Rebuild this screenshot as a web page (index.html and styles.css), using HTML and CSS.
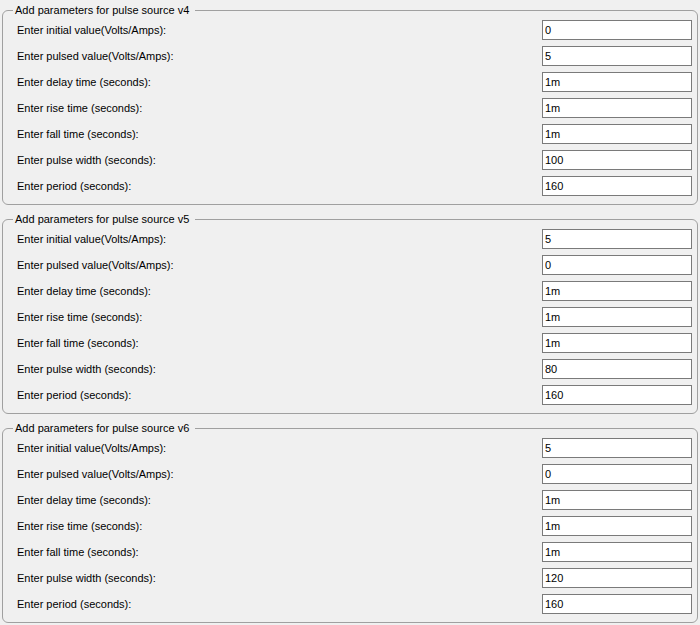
FILE: index.html
```html
<!DOCTYPE html>
<html>
<head>
<meta charset="utf-8">
<link rel="stylesheet" href="styles.css">
</head>
<body>
<div class="page">
  <fieldset class="group">
    <legend class="group-title">Add parameters for pulse source v4</legend>
    <div class="row"><span class="label">Enter initial value(Volts/Amps):</span><input class="field" value="0"></div>
    <div class="row"><span class="label">Enter pulsed value(Volts/Amps):</span><input class="field" value="5"></div>
    <div class="row"><span class="label">Enter delay time (seconds):</span><input class="field" value="1m"></div>
    <div class="row"><span class="label">Enter rise time (seconds):</span><input class="field" value="1m"></div>
    <div class="row"><span class="label">Enter fall time (seconds):</span><input class="field" value="1m"></div>
    <div class="row"><span class="label">Enter pulse width (seconds):</span><input class="field" value="100"></div>
    <div class="row"><span class="label">Enter period (seconds):</span><input class="field" value="160"></div>
  </fieldset>
  <fieldset class="group">
    <legend class="group-title">Add parameters for pulse source v5</legend>
    <div class="row"><span class="label">Enter initial value(Volts/Amps):</span><input class="field" value="5"></div>
    <div class="row"><span class="label">Enter pulsed value(Volts/Amps):</span><input class="field" value="0"></div>
    <div class="row"><span class="label">Enter delay time (seconds):</span><input class="field" value="1m"></div>
    <div class="row"><span class="label">Enter rise time (seconds):</span><input class="field" value="1m"></div>
    <div class="row"><span class="label">Enter fall time (seconds):</span><input class="field" value="1m"></div>
    <div class="row"><span class="label">Enter pulse width (seconds):</span><input class="field" value="80"></div>
    <div class="row"><span class="label">Enter period (seconds):</span><input class="field" value="160"></div>
  </fieldset>
  <fieldset class="group">
    <legend class="group-title">Add parameters for pulse source v6</legend>
    <div class="row"><span class="label">Enter initial value(Volts/Amps):</span><input class="field" value="5"></div>
    <div class="row"><span class="label">Enter pulsed value(Volts/Amps):</span><input class="field" value="0"></div>
    <div class="row"><span class="label">Enter delay time (seconds):</span><input class="field" value="1m"></div>
    <div class="row"><span class="label">Enter rise time (seconds):</span><input class="field" value="1m"></div>
    <div class="row"><span class="label">Enter fall time (seconds):</span><input class="field" value="1m"></div>
    <div class="row"><span class="label">Enter pulse width (seconds):</span><input class="field" value="120"></div>
    <div class="row"><span class="label">Enter period (seconds):</span><input class="field" value="160"></div>
  </fieldset>
</div>
</body>
</html>
```
FILE: styles.css
```css
html, body {
  margin: 0;
  padding: 0;
  background: #f0f0f0;
}
body {
  font-family: "Liberation Sans", Arial, sans-serif;
  font-size: 11px;
  color: #000;
}
.page {
  width: 700px;
  box-sizing: border-box;
  padding: 3px 2px 0 2px;
  display: flex;
  flex-direction: column;
  gap: 7px;
}
.group {
  margin: 0;
  padding: 3px 5px 8px 14px;
  border: 1px solid #a0a0a0;
  border-radius: 6px;
  display: flex;
  flex-direction: column;
  gap: 6px;
  min-width: 0;
}
.group-title {
  font-size: 11px;
  line-height: 14px;
  padding: 0 6px 0 2px;
  margin-left: -4px;
  color: #000;
}
.row {
  display: flex;
  align-items: center;
  justify-content: space-between;
  height: 20px;
}
.label {
  line-height: 14px;
}
.field {
  box-sizing: border-box;
  width: 150px;
  height: 20px;
  margin: 0;
  padding: 0 2px;
  border: 1px solid #7a7a7a;
  border-radius: 0;
  background: #fff;
  font-family: "Liberation Sans", Arial, sans-serif;
  font-size: 11px;
  color: #000;
  outline: none;
}
```
